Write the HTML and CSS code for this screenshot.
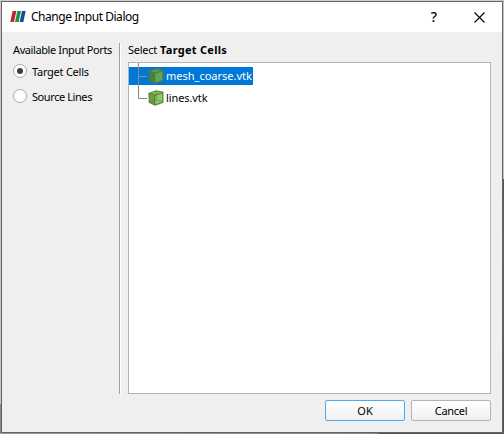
FILE: index.html
```html
<!DOCTYPE html>
<html lang="en">
<head>
<meta charset="utf-8">
<title>Change Input Dialog</title>
<link rel="stylesheet" href="styles.css">
</head>
<body>
<div class="desktop">
<main class="dialog">
  <header class="titlebar">
    <svg class="logo" width="16" height="14" viewBox="0 0 16 14">
      <path fill="#c91f32" d="M2.6 1h3.8L4 12H.3z"/>
      <path fill="#17934a" d="M7.3 1h3.8L8.6 12H5z"/>
      <path fill="#104f91" d="M12 1h3.7l-2.4 11H9.6z"/>
    </svg>
    <h1 class="title">Change Input Dialog</h1>
    <span class="help">?</span>
    <svg class="close" width="11" height="11" viewBox="0 0 11 11"><path d="M.5.5l10 10M10.5.5l-10 10" stroke="#000" stroke-width="1.1"/></svg>
  </header>
  <div class="content">
    <section class="ports">
      <div class="heading"><span class="t-ports">Available Input Ports</span></div>
      <label class="option"><span class="radio checked"></span><span class="t-target">Target Cells</span></label>
      <label class="option"><span class="radio"></span><span class="t-source">Source Lines</span></label>
    </section>
    <div class="separator"></div>
    <section class="selection">
      <div class="heading"><span class="t-select">Select</span><b class="t-bold">Target Cells</b></div>
      <div class="tree">
        <div class="row selected">
          <svg class="branch" width="19" height="24" viewBox="0 0 19 24"><path d="M9.5 0v24M10 13.5h8" fill="none" stroke="#858b91"/></svg>
          <svg class="cube" width="16" height="16" viewBox="0 0 16 16">
            <path fill="#5c7444" d="M.3 3L8 .3l7.5 1.5v11L7 15.7l-6.2-3z"/>
            <path fill="#438344" d="M1.5 4.2L6 5.5v8.7L1.8 12z"/>
            <path fill="#4e9d51" d="M2.3 3.2l6-1.9 5.7 1.1-7 2.2z"/>
            <path fill="#55aa5c" d="M7.3 5.7l7-2.2v8.4l-7 2.4z"/>
          </svg>
          <span class="t-mesh">mesh_coarse.vtk</span>
        </div>
        <div class="row">
          <svg class="branch" width="19" height="22" viewBox="0 0 19 22"><path d="M9.5 0v11.5H18" fill="none" stroke="#858585"/></svg>
          <svg class="cube" width="16" height="16" viewBox="0 0 16 16">
            <path fill="#667e42" d="M.3 3L8 .3l7.5 1.5v11L7 15.7l-6.2-3z"/>
            <path fill="#6ba04a" d="M1.5 4.2L6 5.5v8.7L1.8 12z"/>
            <path fill="#83bd59" d="M2.3 3.2l6-1.9 5.7 1.1-7 2.2z"/>
            <path fill="#8ac967" d="M7.3 5.7l7-2.2v8.4l-7 2.4z"/>
            <path fill="none" stroke="#526b36" stroke-opacity=".55" stroke-width=".7" d="M8.5 1v9M8.5 10l6 2M8.5 10L2 12"/>
          </svg>
          <span class="t-lines">lines.vtk</span>
        </div>
      </div>
    </section>
  </div>
  <footer class="actions">
    <button class="button primary"><span class="t-ok">OK</span></button>
    <button class="button"><span class="t-cancel">Cancel</span></button>
  </footer>
</main>
</div>
</body>
</html>
```
FILE: styles.css
```css
* { box-sizing: border-box; }
body { margin: 0; font: 11px/16px "Noto Sans", sans-serif; color: #000; }
.desktop {
  width: 504px; height: 434px; padding: 1px; overflow: hidden;
  background:
    linear-gradient(90deg, #999 68px, #888 378px, #555 378px) 0 433px / 504px 1px no-repeat,
    linear-gradient(#c5c5c5 179px, #555 179px, #666 240px, #505050) 503px 0 / 1px 434px no-repeat,
    linear-gradient(#c8c8c8 404px, #888 404px) 0 0 / 1px 434px no-repeat,
    #d0d0d0;
}
.dialog {
  width: 502px; height: 432px; border: 1px solid #646464;
  background: #efefef; display: flex; flex-direction: column;
}
.titlebar { height: 30px; flex: none; background: #fff; display: flex; align-items: center; padding: 0 17px 0 8px; }
.title { margin: 0 auto 0 5px; font-size: 12px; font-weight: 400; white-space: nowrap; letter-spacing: -0.46px; }
.help { font-size: 14px; font-weight: 500; margin-right: 37px; }
.content { flex: none; height: 363px; display: flex; padding-right: 11px; }
.ports { width: 117px; padding: 10px 0 0 11px; }
.heading { height: 16px; white-space: nowrap; }
.option { display: flex; align-items: center; height: 25px; gap: 5px; white-space: nowrap; }
.ports .heading { margin-bottom: 1px; }
.radio { width: 14px; height: 14px; margin-bottom: 2px; border: 1px solid #aaa; border-radius: 50%; background: #fff; display: grid; place-items: center; }
.checked::after { content: ""; width: 6px; height: 6px; border-radius: 50%; background: #3c3c3c; }
.separator { width: 2px; margin-top: 11px; height: 351px; border-left: 1px solid #a0a0a0; border-right: 1px solid #fff; }
.selection { flex: 1; padding: 10px 0 0 7px; }
.selection .heading { display: flex; gap: 3px; margin-bottom: 4px; }
.tree { height: 332px; border: 1px solid #b4b4b4; background: #fff; }
.row { display: flex; align-items: center; height: 22px; white-space: nowrap; }
.selected { width: 124px; height: 24px; padding-top: 2px; color: #fff; background: linear-gradient(#0078d7, #0078d7) 0 4px / 100% 18px no-repeat; }
.selected .branch { margin-top: -2px; }
.branch { flex: none; }
.cube { flex: none; margin-right: 2px; }
.actions { display: flex; justify-content: flex-end; gap: 6px; padding: 5px 11px 0 0; }
.button {
  width: 80px; height: 21px; padding: 0; font: inherit; color: #000;
  border: 1px solid #b4b4b4; border-radius: 2px; background: linear-gradient(#fff, #f0f0f0);
}
.primary { border-color: #4ea9f0; }
.t-ports { letter-spacing: -0.4px; }
.t-target { letter-spacing: -0.25px; }
.t-source { letter-spacing: -0.42px; }
.t-select { letter-spacing: -0.25px; }
.t-bold { letter-spacing: 0.28px; }
.t-lines { letter-spacing: -0.1px; }
.t-cancel { letter-spacing: -0.3px; }
```
